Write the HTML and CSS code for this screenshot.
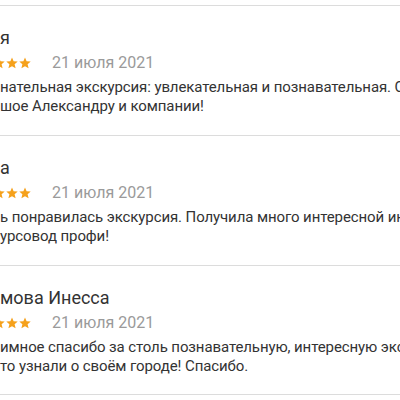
FILE: index.html
```html
<!DOCTYPE html>
<html lang="ru">
<head>
<meta charset="utf-8">
<link rel="stylesheet" href="styles.css">
</head>
<body>
<div class="list">
  <div class="review">
    <div class="name">я</div>
    <div class="meta">
      <div class="stars">
        <svg viewBox="0 0 12 12"><polygon points="6,0.5 7.6,4.3 11.7,4.6 8.6,7.3 9.6,11.3 6,9.2 2.4,11.3 3.4,7.3 0.3,4.6 4.4,4.3"/></svg>
        <svg viewBox="0 0 12 12"><polygon points="6,0.5 7.6,4.3 11.7,4.6 8.6,7.3 9.6,11.3 6,9.2 2.4,11.3 3.4,7.3 0.3,4.6 4.4,4.3"/></svg>
        <svg viewBox="0 0 12 12"><polygon points="6,0.5 7.6,4.3 11.7,4.6 8.6,7.3 9.6,11.3 6,9.2 2.4,11.3 3.4,7.3 0.3,4.6 4.4,4.3"/></svg>
      </div>
      <span class="date">21 июля 2021</span>
    </div>
    <p class="text">нательная экскурсия: увлекательная и познавательная. Спасибо<br>шое Александру и компании!</p>
  </div>
  <div class="review">
    <div class="name">а</div>
    <div class="meta">
      <div class="stars">
        <svg viewBox="0 0 12 12"><polygon points="6,0.5 7.6,4.3 11.7,4.6 8.6,7.3 9.6,11.3 6,9.2 2.4,11.3 3.4,7.3 0.3,4.6 4.4,4.3"/></svg>
        <svg viewBox="0 0 12 12"><polygon points="6,0.5 7.6,4.3 11.7,4.6 8.6,7.3 9.6,11.3 6,9.2 2.4,11.3 3.4,7.3 0.3,4.6 4.4,4.3"/></svg>
        <svg viewBox="0 0 12 12"><polygon points="6,0.5 7.6,4.3 11.7,4.6 8.6,7.3 9.6,11.3 6,9.2 2.4,11.3 3.4,7.3 0.3,4.6 4.4,4.3"/></svg>
      </div>
      <span class="date">21 июля 2021</span>
    </div>
    <p class="text">ь понравилась экскурсия. Получила много интересной информации<br>урсовод профи!</p>
  </div>
  <div class="review">
    <div class="name">мова Инесса</div>
    <div class="meta">
      <div class="stars">
        <svg viewBox="0 0 12 12"><polygon points="6,0.5 7.6,4.3 11.7,4.6 8.6,7.3 9.6,11.3 6,9.2 2.4,11.3 3.4,7.3 0.3,4.6 4.4,4.3"/></svg>
        <svg viewBox="0 0 12 12"><polygon points="6,0.5 7.6,4.3 11.7,4.6 8.6,7.3 9.6,11.3 6,9.2 2.4,11.3 3.4,7.3 0.3,4.6 4.4,4.3"/></svg>
        <svg viewBox="0 0 12 12"><polygon points="6,0.5 7.6,4.3 11.7,4.6 8.6,7.3 9.6,11.3 6,9.2 2.4,11.3 3.4,7.3 0.3,4.6 4.4,4.3"/></svg>
      </div>
      <span class="date">21 июля 2021</span>
    </div>
    <p class="text">имное спасибо за столь познавательную, интересную экскурсию<br>то узнали о своём городе! Спасибо.</p>
  </div>
</div>
</body>
</html>
```

FILE: styles.css
```css
html, body {
  margin: 0;
  padding: 0;
  background: #fff;
  overflow: hidden;
}
body {
  font-family: Roboto, "Noto Sans", sans-serif;
  color: #333;
  width: 400px;
  height: 400px;
}
.list {
  padding-top: 5px;
}
.list .review:last-child {
  border-bottom: 1px solid #dcdcdc;
}
.review {
  height: 130px;
  box-sizing: border-box;
  border-top: 1px solid #dcdcdc;
  padding-top: 22px;
  display: flex;
  flex-direction: column;
  white-space: nowrap;
  overflow: hidden;
}
.name {
  font-size: 18px;
  line-height: 20px;
  color: #333;
}
.meta {
  display: flex;
  align-items: center;
  gap: 21px;
  margin-top: 5px;
  height: 20px;
}
.stars {
  display: flex;
  gap: 1px;
  margin-left: -7px;
}
.stars svg {
  width: 12px;
  height: 12px;
  fill: #f5a11c;
}
.date {
  font-size: 16px;
  line-height: 20px;
  color: #9a9a9a;
}
.text {
  margin: 5px 0 0;
  font-size: 15px;
  line-height: 19px;
  letter-spacing: -0.1px;
  color: #333;
}
```
